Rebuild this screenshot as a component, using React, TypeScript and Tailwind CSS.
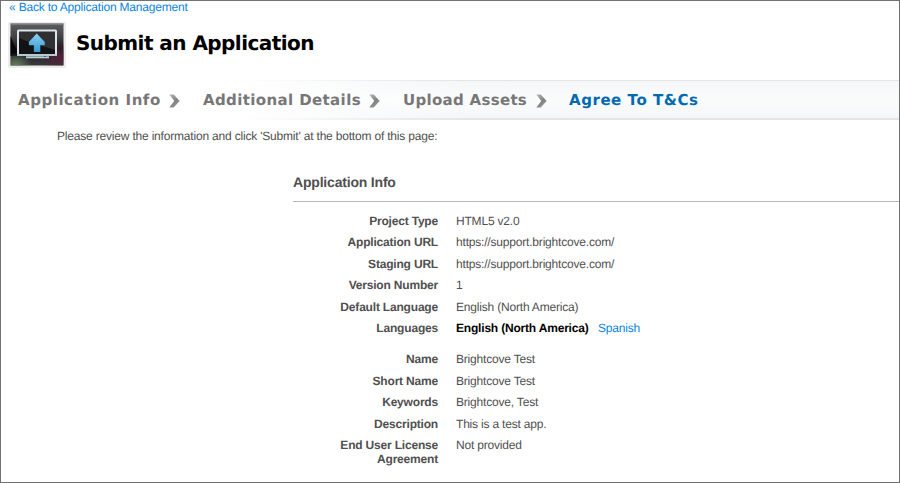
import React from "react";

type Row = { label: React.ReactNode; value: React.ReactNode };

const general: Row[] = [
  { label: "Project Type", value: "HTML5 v2.0" },
  { label: "Application URL", value: "https://support.brightcove.com/" },
  { label: "Staging URL", value: "https://support.brightcove.com/" },
  { label: "Version Number", value: "1" },
  { label: "Default Language", value: "English (North America)" },
  {
    label: "Languages",
    value: (
      <span className="flex gap-[9.5px]">
        <b className="text-black">English (North America)</b>
        <a className="text-[#0b86e0]">Spanish</a>
      </span>
    ),
  },
];

const details: Row[] = [
  { label: "Name", value: "Brightcove Test" },
  { label: "Short Name", value: "Brightcove Test" },
  { label: "Keywords", value: "Brightcove, Test" },
  { label: "Description", value: "This is a test app." },
  { label: "End User License Agreement", value: "Not provided" },
];

function Rows({ rows }: { rows: Row[] }) {
  return (
    <dl className="flex flex-col gap-[7px]">
      {rows.map((row, i) => (
        <div key={i} className="flex gap-[18px] leading-[14.4px]">
          <dt className="ml-[35px] w-[110px] text-right font-bold">{row.label}</dt>
          <dd className="whitespace-nowrap">{row.value}</dd>
        </div>
      ))}
    </dl>
  );
}

function AppIcon() {
  return (
    <svg width="58" height="47" viewBox="0 0 58 47" className="shrink-0">
      <defs>
        <linearGradient id="shell" x1="0" y1="0" x2="0" y2="1">
          <stop offset="0" stopColor="#5d5d62" />
          <stop offset=".35" stopColor="#403e43" />
          <stop offset=".6" stopColor="#18171b" />
          <stop offset="1" stopColor="#3b3c3c" />
        </linearGradient>
        <radialGradient id="plum" cx=".92" cy=".8" r=".35">
          <stop offset="0" stopColor="#54203a" />
          <stop offset="1" stopColor="#54203a" stopOpacity="0" />
        </radialGradient>
        <radialGradient id="moss" cx=".1" cy="1" r=".3">
          <stop offset="0" stopColor="#64805f" />
          <stop offset="1" stopColor="#64805f" stopOpacity="0" />
        </radialGradient>
        <linearGradient id="arrow" x1="0" y1="0" x2="0" y2="1">
          <stop offset="0" stopColor="#8bd2f4" />
          <stop offset="1" stopColor="#339bd0" />
        </linearGradient>
      </defs>
      <rect width="58" height="46" rx="1" fill="#ededee" />
      <rect x="2.5" y="1.5" width="53" height="42" fill="url(#shell)" />
      <path d="M2.5 14c4 9 4 15 15 20H2.5z" fill="#08080b" />
      <rect x="2.5" y="1.5" width="53" height="42" fill="url(#plum)" />
      <rect x="2.5" y="1.5" width="53" height="42" fill="url(#moss)" />
      <path d="M2.5 1.5h53v1.2h-53z" fill="#858589" />
      <rect x="10" y="8.5" width="38" height="24.5" rx=".6" fill="#303032" stroke="#dce5e8" strokeWidth="2" />
      <path d="M11 16c11 5 25 8 36 12v4H11z" fill="#131317" />
      <path d="M9 33h40" stroke="#b5cbd2" strokeWidth="2" />
      <path d="M18 35.3h23" stroke="#b8d1d9" strokeWidth="2" />
      <path d="M36 34.5h2" stroke="#306a86" />
      <path d="M28.7 11.5l8 8.5v3.2h-4.4V30h-6.4v-6.8h-5V20z" fill="url(#arrow)" />
    </svg>
  );
}

function Chevron() {
  return (
    <svg width="11" height="14" viewBox="0 0 11 14" className="mt-[14px] shrink-0">
      <defs>
        <linearGradient id="chevron" x1="0" y1="0" x2=".7" y2="1">
          <stop offset="0" stopColor="#b8b8b8" />
          <stop offset=".6" stopColor="#808080" />
          <stop offset="1" stopColor="#a0a0a0" />
        </linearGradient>
      </defs>
      <path d="M.3.5h4.4L10.7 7l-6 6.6H.3L5.3 7z" fill="url(#chevron)" />
    </svg>
  );
}

export default function App() {
  return (
    <div className="h-[483px] w-[900px] overflow-hidden border border-[#717171] bg-white font-['Liberation_Sans',Arial,sans-serif] text-[12px] tracking-[-0.19px] text-[#505050] [text-rendering:geometricPrecision]">
      <a className="ml-2 mt-[-1px] block h-[15px] leading-[15px] text-[#0b86e0]">« Back to Application Management</a>
      <header className="ml-[7px] mt-[7px] flex h-[47px] gap-[10px]">
        <AppIcon />
        <h1 className="mt-[9px] h-6 whitespace-nowrap font-['DejaVu_Sans',sans-serif] text-[20px] font-bold leading-6 tracking-[-0.55px] text-black">Submit an Application</h1>
      </header>
      <nav className="mt-[11px] flex h-[40px] whitespace-nowrap bg-[linear-gradient(90deg,white_26%,transparent_52%),linear-gradient(#e3e4e5_0_1px,#f5f6f8_1px,#fafcfc_50%,#f5f6f8_38px,#e3e5e6_38px)] pl-[17px] font-['DejaVu_Sans',sans-serif] text-[15px] font-bold leading-[40px] tracking-[0.55px] text-[#777]">
        <span className="w-[151px]">Application Info</span>
        <Chevron />
        <span className="ml-[23px] w-[166px] tracking-[0.38px]">Additional Details</span>
        <Chevron />
        <span className="ml-[23px] w-[133px] tracking-[0.3px]">Upload Assets</span>
        <Chevron />
        <span className="ml-[22px] text-[#006ab1]">Agree To T&amp;Cs</span>
      </nav>
      <p className="ml-[56px] mt-2 leading-4">Please review the information and click 'Submit' at the bottom of this page:</p>
      <main className="ml-[292px] mt-[30px]">
        <h2 className="h-[28px] border-b border-[#b8b8b8] text-[14px] font-bold leading-4">Application Info</h2>
        <div className="mt-[12px] flex flex-col gap-[17px]">
          <Rows rows={general} />
          <Rows rows={details} />
        </div>
      </main>
    </div>
  );
}
